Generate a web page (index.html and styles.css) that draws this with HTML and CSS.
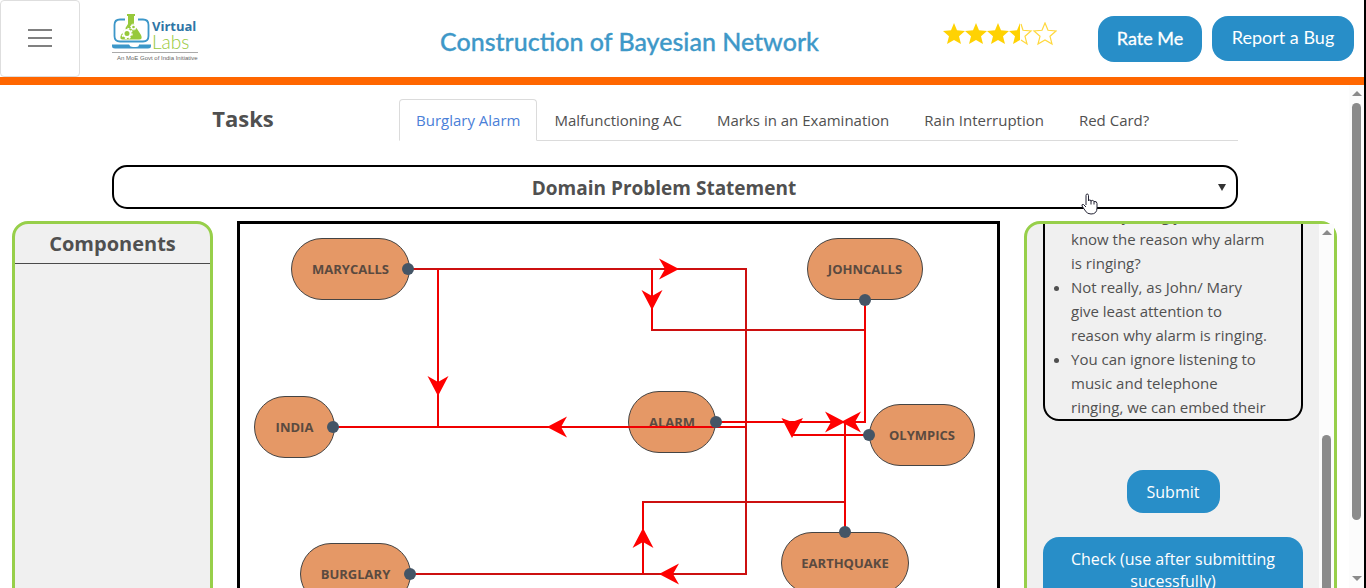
FILE: index.html
```html
<!DOCTYPE html>
<html lang="en">
<head>
<meta charset="utf-8">
<meta name="viewport" content="width=device-width, initial-scale=1">
<title>Construction of Bayesian Network</title>
<link rel="stylesheet" href="styles.css">
</head>
<body>
<header class="header">
  <button class="menu" aria-label="Menu"><span></span><span></span><span></span></button>
  <svg class="logo" viewBox="0 0 90 50" role="img" aria-label="Virtual Labs">
    <path d="M14 6.500H9Q3.500 6.500 3.500 12V23Q3.500 28.500 9 28.500H32Q37.500 28.500 37.500 23V12Q37.500 6.500 32 6.500H27" fill="none" stroke="#3c97c9" stroke-width="1.800"/>
    <path d="M1 31.500H18Q19 34 22 34H25Q28 34 28 31.500H40V33Q40 35.500 37 35.500H4Q1 35.500 1 33Z" fill="#3c97c9"/>
    <path d="M16 1H24V3H23V11L30 22Q32 26.500 28 26.500H12Q8 26.500 10 22L17 11V3H16Z" fill="#97c93c"/>
    <g fill="none" stroke="#fff"><circle cx="16" cy="20.500" r="3.500" stroke-width="2"/><circle cx="16" cy="20.500" r="5" stroke-width="1.500" stroke-dasharray="2 1.900"/><circle cx="22.500" cy="14" r="2" stroke-width="1.400"/><circle cx="22.500" cy="14" r="3" stroke-width="1" stroke-dasharray="1.300 1"/></g>
    <text class="logo-virtual" x="41" y="18">Virtual</text>
    <text class="logo-labs" x="41" y="36">Labs</text>
    <path d="M1 39.500H87" stroke="#aaa"/>
    <text class="logo-note" x="6" y="47">An MoE Govt of India Initiative</text>
  </svg>
  <h1 class="title">Construction of Bayesian Network</h1>
  <svg class="stars" viewBox="0 0 114 24" role="img" aria-label="3.5 of 5 stars">
    <defs><path id="star" d="M11 1 14 8.300 22 9 16 14.300 18 22 11 18 4 22 6 14.300 0 9 8 8.300Z"/></defs>
    <g fill="#ffd203"><use href="#star"/><use href="#star" x="22"/><use href="#star" x="44"/><path d="M77 1V18L70 22 72 14.300 66 9 74 8.300Z"/></g>
    <g fill="none" stroke="#ffd83d" stroke-width="1.200"><path d="M78 2 80 8.300 88 9 82 14.300 84 22 78 18"/><use href="#star" x="91"/></g>
  </svg>
  <div class="actions">
    <button class="btn btn-rate">Rate Me</button>
    <button class="btn btn-bug">Report a Bug</button>
  </div>
</header>
<div class="body">
  <main class="page">
    <div class="top">
      <div class="tasks">
        <h2 class="tasks-title">Tasks</h2>
        <nav class="tabs">
          <a class="tab active" href="#">Burglary Alarm</a>
          <a class="tab" href="#">Malfunctioning AC</a>
          <a class="tab" href="#">Marks in an Examination</a>
          <a class="tab" href="#">Rain Interruption</a>
          <a class="tab" href="#">Red Card?</a>
        </nav>
      </div>
      <button class="statement">
        <span class="statement-label">Domain Problem Statement</span>
        <svg class="caret" viewBox="0 0 8 7" aria-hidden="true"><path d="M0 0H8L4 7Z"/></svg>
      </button>
    </div>
    <div class="columns">
      <section class="panel components"><h2 class="panel-title">Components</h2></section>
      <section class="canvas" aria-label="Network">
        <div class="node mary">MARYCALLS</div>
        <div class="node john">JOHNCALLS</div>
        <div class="node india">INDIA</div>
        <div class="node alarm">ALARM</div>
        <div class="node olympics">OLYMPICS</div>
        <div class="node burglary">BURGLARY</div>
        <div class="node earthquake">EARTHQUAKE</div>
        <svg class="wires" width="757" height="400" viewBox="240 224 757 400" aria-hidden="true">
          <defs><path id="arrow" d="M0 0 -20-10.500-14 0-20 10.500Z"/></defs>
          <g class="wire dark"><path d="M408 269H746V574H411"/><path d="M652 269V330H865"/><path d="M643 574V502H845"/></g>
          <g class="wire"><path d="M438 269V427"/><path d="M333 427H746"/><path d="M865 300V422H715"/><path d="M792 422V435H869"/><path d="M845 422V532"/><path d="M652 269V330M643 574V502"/></g>
          <g class="arrows">
            <use href="#arrow" transform="translate(679 269)"/><use href="#arrow" transform="translate(845 422)"/>
            <use href="#arrow" transform="translate(652 310) rotate(90)"/><use href="#arrow" transform="translate(438 396) rotate(90)"/>
            <path d="M792 438 781.500 418 792 422 803 418Z"/>
            <use href="#arrow" transform="translate(547 427) rotate(180)"/><use href="#arrow" transform="translate(841 422) rotate(180)"/><use href="#arrow" transform="translate(659 574) rotate(180)"/>
            <use href="#arrow" transform="translate(643 528) rotate(-90)"/>
          </g>
          <g class="ports"><circle cx="408" cy="269" r="6"/><circle cx="865" cy="300" r="6"/><circle cx="333" cy="427" r="6"/><circle cx="716" cy="422" r="6"/><circle cx="869" cy="435" r="6"/><circle cx="410" cy="574" r="6"/><circle cx="845" cy="532" r="6"/></g>
        </svg>
      </section>
      <section class="panel side">
        <div class="side-scroll">
          <div class="side-content">
            <ul class="hints">
              <li>Did they bring you to<br>know the reason why alarm<br>is ringing?</li>
              <li>Not really, as John/ Mary<br>give least attention to<br>reason why alarm is ringing.</li>
              <li>You can ignore listening to<br>music and telephone<br>ringing, we can embed their</li>
            </ul>
            <button class="btn btn-submit">Submit</button>
            <button class="btn btn-check">Check (use after submitting sucessfully)</button>
          </div>
          <div class="bar bar-side" aria-hidden="true"><i class="up"></i><i class="thumb"></i></div>
        </div>
      </section>
    </div>
  </main>
  <div class="bar bar-page" aria-hidden="true"><i class="up"></i><i class="thumb"></i><i class="down"></i></div>
</div>
<svg class="pointer" viewBox="0 0 18 22" aria-hidden="true"><path d="M5 12V2.500Q5 1 6.200 1T7.500 2.500V8Q8 6 10 7.500V8Q12 6.500 13 8.500 16 8 16 10.500V15Q16 21 10 21 6 21 4.500 18L1 13Q.500 11 2.500 11.500L5 14M10 8V11.500M13 9V11.500" fill="#fff" stroke="#223" stroke-width="1"/></svg>
</body>
</html>
```

FILE: styles.css
```css
* { box-sizing: border-box; }
body {
  margin: 0;
  height: 100vh;
  display: flex;
  flex-direction: column;
  overflow: hidden;
  border-right: 2px solid #000;
  background: #fff;
  color: #505050;
  font-family: "Open Sans", "Noto Sans", sans-serif;
  font-size: 15px;
}
button { font: inherit; color: inherit; margin: 0; }
h1, h2 { margin: 0; }

.header {
  display: flex;
  align-items: flex-start;
  flex: none;
  height: 85px;
  padding-right: 10px;
  border-bottom: 8px solid #f60;
}
.menu {
  display: flex;
  flex-direction: column;
  align-items: center;
  justify-content: center;
  gap: 6px;
  width: 80px;
  height: 77px;
  padding: 0 0 2px;
  border: 1px solid #dedede;
  border-radius: 4px;
  background: #fff;
}
.menu span { width: 24px; height: 2px; background: #808080; }
.logo { width: 90px; height: 50px; margin: 13px 0 0 31px; }
.logo-virtual { font: bold 13px "Open Sans", sans-serif; fill: #2e75a5; }
.logo-labs { font: 300 19px Lato, sans-serif; fill: #97c93c; }
.logo-note { font: 6px "Liberation Sans", sans-serif; fill: #666; }
.title {
  flex: 1;
  padding: 24px 0 0 115px;
  text-align: center;
  white-space: nowrap;
  color: #3e98c8;
  font: 500 25px/34px Lato, sans-serif;
  -webkit-text-stroke: 0.3px #3e98c8;
}
.stars { width: 114px; height: 24px; margin: 22px 41px 0 0; }
.actions { display: flex; align-items: flex-start; gap: 10px; padding-top: 16px; }
.btn {
  border: 0;
  border-radius: 16px;
  background: #288ec8;
  color: #fff;
  text-align: center;
  font-size: 16px;
}
.btn-rate, .btn-bug { padding: 0 16px 3px; font-family: Lato, sans-serif; font-size: 18px; white-space: nowrap; }
.btn-rate { min-width: 104px; height: 46px; -webkit-text-stroke: 0.3px #fff; }
.btn-bug { min-width: 142px; height: 45px; }

.body { display: flex; flex: 1; min-height: 0; }
.page { flex: 1; min-width: 0; padding: 14px 12px 0; }
.top { margin: 0 99px 0 100px; }
.tasks { display: flex; height: 42px; }
.tasks-title { width: 262px; margin-right: 25px; text-align: center; font-size: 22px; line-height: 38px; }
.tabs { display: flex; flex: 1; border-bottom: 1px solid #dbdbdb; }
.tab {
  height: 42px;
  padding: 0 17px 0 16px;
  border: 1px solid transparent;
  border-radius: 4px 4px 0 0;
  color: #505050;
  line-height: 40px;
  text-decoration: none;
  white-space: nowrap;
}
.tab.active { padding: 0 16px; border-color: #dbdbdb; border-bottom-color: #fff; background: #fff; color: #4a80d8; }
.statement {
  display: flex;
  align-items: center;
  width: 100%;
  height: 44px;
  margin: 24px 0 12px;
  padding: 1px 10px 0;
  border: 2px solid #000;
  border-radius: 15px;
  background: #fff;
}
.statement-label { flex: 1; padding-right: 14px; font-size: 19px; font-weight: 700; }
.caret { width: 8px; height: 7px; fill: #333; }

.columns { display: grid; grid-template-columns: 201fr 763fr 313fr; gap: 24px; height: 500px; }
.panel { border: 3px solid #97cf4a; border-radius: 16px; background: #f0f0f0; }
.panel-title { border-bottom: 1px solid #4a4a4a; height: 40px; text-align: center; font-size: 20px; line-height: 40px; }

.canvas { position: relative; border: 3px solid #000; background: #fff; }
.wires { position: absolute; left: 0; top: 0; }
.wire { fill: none; stroke: #f00000; stroke-width: 2; }
.wire.dark { stroke: #cc1010; }
.arrows { fill: #f00; }
.ports { fill: #445566; }
.node {
  position: absolute;
  height: 62px;
  border: 1px solid #444;
  border-radius: 31px;
  background: #e59866;
  color: #5a4a40;
  font-size: 13px;
  font-weight: 700;
  line-height: 60px;
  text-align: center;
}
.mary { left: 51px; top: 14px; width: 119px; }
.john { left: 567px; top: 14px; width: 116px; }
.india { left: 14px; top: 172px; width: 81px; }
.alarm { left: 388px; top: 167px; width: 88px; }
.olympics { left: 629px; top: 180px; width: 106px; }
.burglary { left: 60px; top: 319px; width: 111px; }
.earthquake { left: 541px; top: 308px; width: 128px; }

.side-scroll { display: flex; height: 100%; overflow: hidden; }
.side-content { display: flex; flex: 1; flex-direction: column; align-items: center; min-width: 0; padding: 0 16px; }
.hints {
  flex: none;
  width: 100%;
  height: 222px;
  margin: -25px 0 49px;
  padding: 2px 0 0 26px;
  overflow: hidden;
  border: 2px solid #000;
  border-radius: 16px;
  line-height: 24px;
  white-space: nowrap;
}
.btn-submit { flex: none; min-width: 93px; height: 43px; margin-bottom: 24px; }
.btn-check { flex: none; width: 100%; padding: 11px 16px; line-height: 22px; }

.bar { display: flex; flex: none; flex-direction: column; align-items: center; width: 15px; background: #fcfcfc; }
.up, .down { border: 5px solid transparent; }
.up { border-top: 0; border-bottom-color: #8b8b8b; margin-top: 6px; }
.down { border-bottom: 0; border-top-color: #8b8b8b; margin: auto 0 7px; }
.thumb { width: 9px; border-radius: 5px; background: #8b8b8b; }
.bar-page .thumb { height: 83%; margin-top: 7px; }
.bar-side .thumb { flex: 1; margin-top: 200px; }
.pointer { position: absolute; left: 1081px; top: 193px; width: 18px; height: 22px; }
```
